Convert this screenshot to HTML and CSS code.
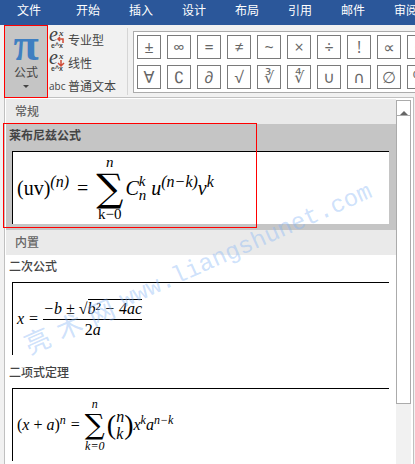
FILE: index.html
```html
<!DOCTYPE html>
<html lang="zh-CN">
<head>
    <meta charset="UTF-8">
    <meta name="viewport" content="width=device-width, initial-scale=1.0">
    <title>公式</title>
    <link rel="stylesheet" href="styles.css">
</head>
<body>
    <nav class="tabs">
        <a href="#">文件</a>
        <a href="#">开始</a>
        <a href="#">插入</a>
        <a href="#">设计</a>
        <a href="#">布局</a>
        <a href="#">引用</a>
        <a href="#">邮件</a>
        <a href="#">审阅</a>
    </nav>

    <div class="ribbon">
        <button class="formula-button">
            <span class="pi">π</span>
            <span>公式</span>
            <span class="arrow-down"></span>
        </button>
        <div class="tools">
            <button>
                <svg class="tool-icon" width="16" height="18" viewBox="0 0 16 18">
                    <text class="glyph-e" x="0" y="10">e</text>
                    <text class="glyph-x" x="10" y="5">x</text>
                    <text class="glyph-small" x="2" y="17">e^x</text>
                    <path class="red-arrow" d="M14 12V8H9M11 6L9 8l2 2"/>
                </svg>
                专业型
            </button>
            <button>
                <svg class="tool-icon" width="16" height="18" viewBox="0 0 16 18">
                    <text class="glyph-e" x="0" y="10">e</text>
                    <text class="glyph-x" x="10" y="5">x</text>
                    <text class="glyph-small" x="2" y="17">e^x</text>
                    <path class="red-arrow" d="M12 6v5M9 9l3 3 3-3"/>
                </svg>
                线性
            </button>
            <button><span class="abc">abc</span>普通文本</button>
        </div>
        <div class="symbols">
            <button>±</button>
            <button>∞</button>
            <button>=</button>
            <button>≠</button>
            <button>~</button>
            <button>×</button>
            <button>÷</button>
            <button>!</button>
            <button>∝</button>
            <button>&lt;</button>
            <button>∀</button>
            <button>∁</button>
            <button>∂</button>
            <button>√</button>
            <button>∛</button>
            <button>∜</button>
            <button>∪</button>
            <button>∩</button>
            <button>∅</button>
            <button>%</button>
        </div>
    </div>

    <main class="panel">
        <div class="list">
            <h2>常规</h2>
            <section class="item selected">
                <h3>莱布尼兹公式</h3>
                <div class="formula large">
                    <span>(uv)</span>
                    <i class="sup">(n)</i>
                    <span class="equals">=</span>
                    <span class="sum"><i>n</i><b>∑</b><span>k−0</span></span>
                    <i>C</i>
                    <span class="scripts"><i>k</i><i>n</i></span>
                    <i>u</i>
                    <i class="sup">(n−k)</i>
                    <i>v</i>
                    <i class="sup">k</i>
                </div>
            </section>

            <h2>内置</h2>
            <section class="item">
                <h3>二次公式</h3>
                <div class="formula">
                    <i>x</i>
                    <span class="equals">=</span>
                    <span class="fraction">
                        <span class="numerator"><i>−b ± </i><span class="root">√</span><i class="radicand">b² − 4ac</i></span>
                        <span>2<i>a</i></span>
                    </span>
                </div>
            </section>
            <section class="item">
                <h3>二项式定理</h3>
                <div class="formula">
                    <span>(<i>x</i> + <i>a</i>)</span>
                    <i class="sup">n</i>
                    <span class="equals">=</span>
                    <span class="sum"><i>n</i><b>∑</b><i>k=0</i></span>
                    <span class="paren">(</span>
                    <span class="binomial"><i>n</i><i>k</i></span>
                    <span class="paren">)</span>
                    <i>x</i>
                    <i class="sup">k</i>
                    <i>a</i>
                    <i class="sup">n−k</i>
                </div>
            </section>
        </div>
        <div class="scrollbar">
            <button class="scroll-up" aria-label="向上"></button>
            <div class="thumb"></div>
        </div>
        <div class="watermark"><span>亮</span><span>术</span><span>网</span><span class="site">www.liangshunet.com</span></div>
    </main>
</body>
</html>
```
FILE: styles.css
```css
*, *::before, *::after {
    box-sizing: border-box;
}
body {
    margin: 0;
    height: 100vh;
    display: flex;
    flex-direction: column;
    overflow: hidden;
    background: #f1f1f1;
    color: #444;
    font-family: "Noto Sans CJK SC", sans-serif;
    font-size: 12px;
}
button {
    padding: 0;
    border: none;
    background: none;
    color: inherit;
    font: inherit;
}

/* tabs */
.tabs {
    display: flex;
    flex: none;
    gap: 29px;
    height: 25px;
    padding-left: 17px;
    background: #2b579a;
}
.tabs a {
    flex: none;
    color: #fff;
    line-height: 20px;
    text-decoration: none;
}
.tabs a:first-child {
    margin-right: 6px;
}

/* ribbon */
.ribbon {
    display: flex;
    flex: none;
    height: 72px;
    padding-left: 4px;
}
.formula-button {
    flex: none;
    display: flex;
    flex-direction: column;
    align-items: center;
    width: 44px;
    height: 73px;
    border: 1px solid #f00;
    background: #c5c5c5;
    line-height: 18px;
    z-index: 1;
}
.pi {
    color: #3f7fc1;
    font: bold 46px/37px "Liberation Serif", serif;
}
.arrow-down {
    margin-top: 4px;
    border: 3px solid transparent;
    border-top-color: #444;
}
.tools {
    flex: none;
    width: 80px;
    height: 67px;
    margin-top: 3px;
    border-right: 1px solid #d5d5d5;
}
.tools button {
    display: flex;
    align-items: center;
    gap: 3px;
    height: 23px;
    padding-left: 1px;
    white-space: nowrap;
}
.abc {
    width: 16px;
    font-family: "Open Sans", sans-serif;
    font-size: 10px;
}
.tool-icon {
    overflow: visible;
}
.tool-icon text {
    fill: #444;
    font-family: "Liberation Serif", serif;
}
.tool-icon .glyph-e {
    font-size: 20px;
    font-style: italic;
}
.tool-icon .glyph-x {
    font-size: 9px;
    font-style: italic;
    font-weight: bold;
}
.tool-icon .glyph-small {
    font: bold 7px "Liberation Sans", sans-serif;
}
.red-arrow {
    fill: none;
    stroke: #d04a35;
    stroke-width: 1.5;
}
.symbols {
    flex: 1;
    display: grid;
    grid-template-columns: repeat(10, 24px);
    grid-auto-rows: 24px;
    gap: 6px;
    height: 62px;
    margin: 6px 0 0 5px;
    padding: 3px;
    overflow: hidden;
    border: 1px solid #ababab;
    border-right: none;
    background: #fff;
}
.symbols button {
    border: 1px solid #7a7a7a;
    color: #666;
    font: 16px/20px "Open Sans", "DejaVu Sans", sans-serif;
}

/* formula list */
.panel {
    position: relative;
    flex: 1;
    display: flex;
    min-height: 0;
    margin: 0 1px 0 4px;
    padding-left: 1px;
    border: 1px solid #c0c0c0;
    border-bottom: none;
    background: #fff;
}
.list {
    flex: 1;
    padding-top: 1px;
}
h2, h3 {
    margin: 0;
    font-size: 12px;
    font-weight: 500;
}
h2 {
    height: 25px;
    padding-left: 9px;
    background: #eaeaea;
    color: #666;
    line-height: 24px;
}
h3 {
    padding-left: 3px;
    line-height: 22px;
    height: 27px;
}
.item {
    position: relative;
    height: 106px;
}
.selected {
    background: #c5c5c5;
}
.selected h3 {
    font-weight: bold;
}
.selected::after {
    content: "";
    position: absolute;
    top: -1px;
    left: -3px;
    width: 65%;
    height: 105px;
    border: 1px solid #f00;
}
.formula {
    display: flex;
    align-items: center;
    height: 73px;
    margin: 0 7px 0 6px;
    padding-left: 4px;
    border-top: 1px solid #000;
    border-left: 1px solid #000;
    background: #fff;
    color: #000;
    font: 16px/20px "Liberation Serif", serif;
    white-space: pre;
}
.sup {
    padding-bottom: 10px;
    font-size: 12px;
    line-height: 12px;
}
.equals {
    margin: 0 5px;
}
.sum {
    display: flex;
    flex-direction: column;
    align-items: center;
    margin-right: 2px;
    font-size: 12px;
    line-height: 12px;
}
.sum b {
    font-family: "DejaVu Serif", serif;
    font-size: 28px;
    font-weight: normal;
    line-height: 30px;
}
.large {
    font-size: 20px;
}
.large .sup {
    padding-bottom: 12px;
    font-size: 16px;
}
.large .equals {
    margin: 0 8px;
}
.large .sum {
    font-size: 15px;
    line-height: 14px;
}
.large .sum b {
    font-size: 38px;
    line-height: 38px;
}
.scripts {
    display: flex;
    flex-direction: column;
    margin-right: 5px;
    font-size: 15px;
    line-height: 14px;
}
.fraction {
    display: flex;
    flex-direction: column;
    align-items: center;
}
.numerator {
    display: flex;
    border-bottom: 1px solid #000;
}
.radicand {
    border-top: 1px solid #000;
    line-height: 18px;
}
.paren {
    font-size: 28px;
    line-height: 28px;
}
.binomial {
    display: flex;
    flex-direction: column;
    line-height: 17px;
}

/* scrollbar */
.scrollbar {
    flex: none;
    display: flex;
    flex-direction: column;
    width: 15px;
    margin: 2px 2px 0 0;
    background: #f1f1f1;
}
.scroll-up {
    display: flex;
    justify-content: center;
    height: 16px;
    border: 1px solid #ababab;
    background: #fff;
}
.scroll-up::before {
    content: "";
    margin-top: 1px;
    border: 4px solid transparent;
    border-bottom-color: #666;
}
.thumb {
    height: 79%;
    border: 1px solid #ababab;
    border-top: none;
    background: #fff;
}

.watermark {
    position: absolute;
    left: 20px;
    top: 232px;
    display: flex;
    align-items: center;
    gap: 9px;
    color: rgba(130, 180, 245, 0.4);
    font-size: 26px;
    line-height: 30px;
    white-space: nowrap;
    transform: rotate(-24deg);
    transform-origin: 0 50%;
    pointer-events: none;
}
.site {
    font-family: "Liberation Mono", monospace;
    font-size: 24px;
}
```
